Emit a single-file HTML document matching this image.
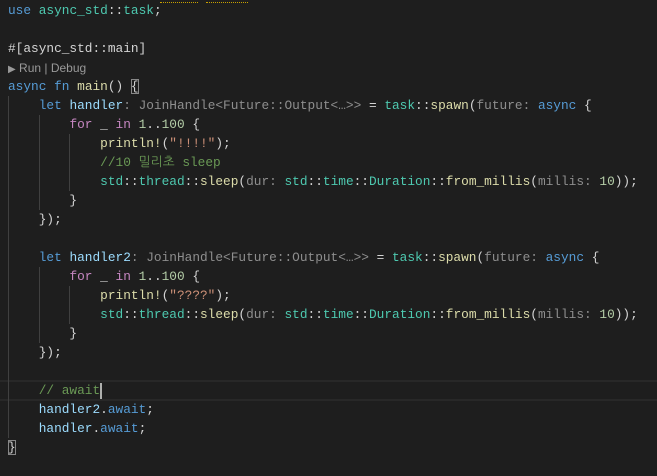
<!DOCTYPE html>
<html><head><meta charset="utf-8"><style>
html,body{margin:0;padding:0;background:#1e1e1e;width:657px;height:476px;overflow:hidden;position:relative}
.l{position:absolute;left:8px;height:19px;line-height:19px;white-space:pre;font-family:"Liberation Mono","NanumGothic",monospace;font-size:12.8px;color:#d4d4d4}
.k{color:#569cd6}.p{color:#c586c0}.v{color:#9cdcfe}.t{color:#4ec9b0}.f{color:#dcdcaa}.s{color:#ce9178}.c{color:#6a9955}.n{color:#b5cea8}.h{color:#8e8e8e}
.g{position:absolute;width:1px;background:#404040}
.cl{position:absolute;left:8px;top:59px;height:19px;line-height:19px;font-family:"Liberation Sans",sans-serif;font-size:12px;color:#999}
</style></head><body>
<div style="position:absolute;left:160px;top:0;width:38px;height:2px;border-bottom:1px dotted #c8a000"></div>
<div style="position:absolute;left:206px;top:0;width:42px;height:2px;border-bottom:1px dotted #c8a000"></div>
<div style="position:absolute;left:0;top:380px;width:657px;height:17px;border-top:2px solid #282828;border-bottom:2px solid #282828"></div>
<div class="g" style="left:8px;top:96px;height:342px"></div>
<div class="g" style="left:39px;top:115px;height:95px"></div>
<div class="g" style="left:69px;top:134px;height:57px"></div>
<div class="g" style="left:39px;top:267px;height:76px"></div>
<div class="g" style="left:69px;top:286px;height:38px"></div>
<div class="l" style="top:1px"><span class="k">use</span> <span class="t">async_std</span>::<span class="t">task</span>;</div>
<div class="l" style="top:39px">#[async_std::main]</div>
<div class="cl"><span style="font-size:10px">▶</span> Run | Debug</div>
<div class="l" style="top:77px"><span class="k">async</span> <span class="k">fn</span> <span class="f">main</span>() <span style="outline:1px solid #888;outline-offset:-1px">{</span></div>
<div class="l" style="top:96px">    <span class="k">let</span> <span class="v">handler</span><span class="h">: JoinHandle&lt;Future::Output&lt;…&gt;&gt;</span> = <span class="t">task</span>::<span class="f">spawn</span>(<span class="h">future: </span><span class="k">async</span> {</div>
<div class="l" style="top:115px">        <span class="p">for</span> _ <span class="p">in</span> <span class="n">1</span>..<span class="n">100</span> {</div>
<div class="l" style="top:134px">            <span class="f">println!</span>(<span class="s">"!!!!"</span>);</div>
<div class="l" style="top:153px">            <span class="c">//10 밀리초 sleep</span></div>
<div class="l" style="top:172px">            <span class="t">std</span>::<span class="t">thread</span>::<span class="f">sleep</span>(<span class="h">dur: </span><span class="t">std</span>::<span class="t">time</span>::<span class="t">Duration</span>::<span class="f">from_millis</span>(<span class="h">millis: </span><span class="n">10</span>));</div>
<div class="l" style="top:191px">        }</div>
<div class="l" style="top:210px">    });</div>
<div class="l" style="top:248px">    <span class="k">let</span> <span class="v">handler2</span><span class="h">: JoinHandle&lt;Future::Output&lt;…&gt;&gt;</span> = <span class="t">task</span>::<span class="f">spawn</span>(<span class="h">future: </span><span class="k">async</span> {</div>
<div class="l" style="top:267px">        <span class="p">for</span> _ <span class="p">in</span> <span class="n">1</span>..<span class="n">100</span> {</div>
<div class="l" style="top:286px">            <span class="f">println!</span>(<span class="s">"????"</span>);</div>
<div class="l" style="top:305px">            <span class="t">std</span>::<span class="t">thread</span>::<span class="f">sleep</span>(<span class="h">dur: </span><span class="t">std</span>::<span class="t">time</span>::<span class="t">Duration</span>::<span class="f">from_millis</span>(<span class="h">millis: </span><span class="n">10</span>));</div>
<div class="l" style="top:324px">        }</div>
<div class="l" style="top:343px">    });</div>
<div class="l" style="top:381px">    <span class="c">// await</span><span style="display:inline-block;width:2px;height:16px;background:#aeafad;vertical-align:middle"></span></div>
<div class="l" style="top:400px">    <span class="v">handler2</span>.<span class="k">await</span>;</div>
<div class="l" style="top:419px">    <span class="v">handler</span>.<span class="k">await</span>;</div>
<div class="l" style="top:438px"><span style="outline:1px solid #888;outline-offset:-1px">}</span></div>
</body></html>
